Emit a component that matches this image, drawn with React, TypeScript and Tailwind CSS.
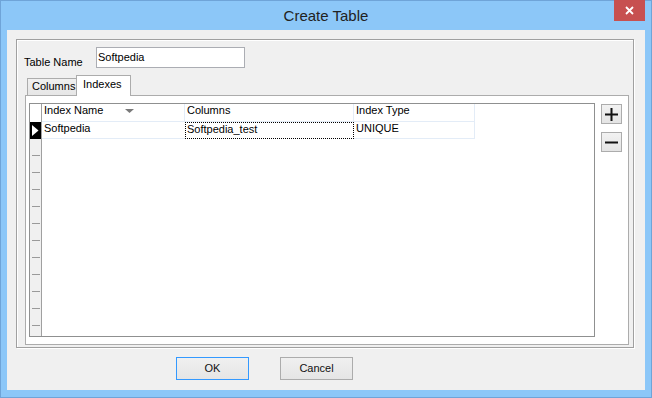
const FONT = "font-['Liberation_Sans',Arial,sans-serif]";

const ROW_DASHES = Array.from({ length: 11 });

function Triangle() {
  return (
    <svg width="7" height="11" viewBox="0 0 7 11" className="block">
      <path d="M0 0 L6.5 5.5 L0 11 Z" fill="#fff" />
    </svg>
  );
}

function SortGlyph() {
  return (
    <svg width="9" height="4" viewBox="0 0 9 4" className="block">
      <path d="M0 0 H9 L4.5 4 Z" fill="#7a7a7a" />
    </svg>
  );
}

function SideButton({ minus }: { minus?: boolean }) {
  return (
    <button
      type="button"
      className="grid h-[20px] w-[21px] place-items-center border border-[#acacac] bg-gradient-to-b from-[#f2f2f2] to-[#e4e4e4]"
    >
      <svg width="13" height="13" viewBox="0 0 13 13" className="block">
        <rect x="0" y="5.5" width="13" height="2" fill="#111" />
        {!minus && <rect x="5.5" y="0" width="2" height="13" fill="#111" />}
      </svg>
    </button>
  );
}

function DialogButton({ label, focused }: { label: string; focused?: boolean }) {
  return (
    <button
      type="button"
      className={
        "h-[23px] w-[73px] bg-gradient-to-b from-[#f0f0f0] to-[#e5e5e5] text-[11px] text-[#111] " +
        (focused ? "border border-[#3399ff]" : "border border-[#acacac]")
      }
    >
      {label}
    </button>
  );
}

function IndexGrid() {
  return (
    <div className="flex h-[234px] w-[566px] border border-[#8f9090] bg-white text-[11px] leading-[13px] text-black">
      {/* row selectors */}
      <div className="flex w-[12px] flex-col border-r border-[#a0a0a0] bg-[#f0f0f0]">
        <div className="h-[18px] bg-white" />
        <div className="grid h-[17px] place-items-center bg-black">
          <Triangle />
        </div>
        {ROW_DASHES.map((_, i) => (
          <div key={i} className="flex h-[17px] items-end pl-[2px]">
            <div className="h-px w-[8px] bg-[#9a9a9a]" />
          </div>
        ))}
      </div>

      <div className="flex flex-col">
        <div className="flex h-[18px]">
          <div className="flex w-[143px] items-start border-b border-r border-[#e3ecf7] pl-[2px]">
            <span>Index Name</span>
            <span className="ml-[22px] mt-[5px]">
              <SortGlyph />
            </span>
          </div>
          <div className="w-[169px] border-b border-r border-[#e3ecf7] pl-[2px]">Columns</div>
          <div className="w-[121px] border-b border-r border-[#e3ecf7] pl-[2px]">Index Type</div>
        </div>
        <div className="flex h-[17px]">
          <div className="w-[143px] border-b border-[#e3ecf7] pl-[2px]">Softpedia</div>
          <div className="w-[169px] border border-dotted border-black pl-[1px] leading-[12px]">Softpedia_test</div>
          <div className="w-[121px] border-b border-r border-[#e3ecf7] pl-[2px]">UNIQUE</div>
        </div>
      </div>
    </div>
  );
}

export default function App() {
  return (
    <div className={`${FONT} h-[398px] w-[652px] border border-[#6fa4d8] bg-[#8cc7f8]`}>
      <div className="relative flex h-[29px] items-center justify-center">
        <span className="mt-[1px] text-[15px] text-[#222]">Create Table</span>
        <div className="absolute right-[6px] top-[-1px] grid h-[21px] w-[31px] place-items-center bg-[#c75050]">
          <svg width="9" height="9" viewBox="0 0 9 9" className="block">
            <path d="M1 1 L8 8 M8 1 L1 8" stroke="#fff" strokeWidth="1.8" />
          </svg>
        </div>
      </div>

      <div className="ml-[6px] h-[360px] w-[638px] bg-[#f0f0f0] pl-[9px] pt-[9px]">
        <div className="h-[309px] w-[618px] border border-[#a0a0a0] pl-[7px] pt-[7px] shadow-[inset_1px_1px_0_#fff,1px_1px_0_#fff]">
          <div className="flex items-start">
            <span className="mt-[9px] w-[72px] text-[11px] leading-[13px] text-black">Table Name</span>
            <div className="flex h-[21px] w-[149px] items-center border border-[#abadb3] bg-white pl-[1px] text-[11px] text-black">
              Softpedia
            </div>
          </div>

          <div className="ml-[3px] mt-[6px] flex h-[20px] items-end text-[11px] leading-[13px] text-black">
            <div className="h-[17px] w-[50px] border border-b-0 border-[#acacac] bg-gradient-to-b from-[#f0f0f0] to-[#e6e6e6] pl-[4px] pt-[1px]">
              Columns
            </div>
            <div className="relative z-10 -mb-px ml-[-1px] h-[21px] w-[55px] border border-b-0 border-[#acacac] bg-white pl-[6px] pt-[2px]">
              Indexes
            </div>
          </div>

          <div className="ml-[1px] flex h-[250px] w-[604px] border border-[#acacac] bg-white pl-[3px] pt-[7px]">
            <IndexGrid />
            <div className="ml-[6px] flex flex-col gap-[8px] pt-[1px]">
              <SideButton />
              <SideButton minus />
            </div>
          </div>
        </div>

        <div className="mt-[9px] flex gap-[31px] pl-[160px]">
          <DialogButton label="OK" focused />
          <DialogButton label="Cancel" />
        </div>
      </div>
    </div>
  );
}
